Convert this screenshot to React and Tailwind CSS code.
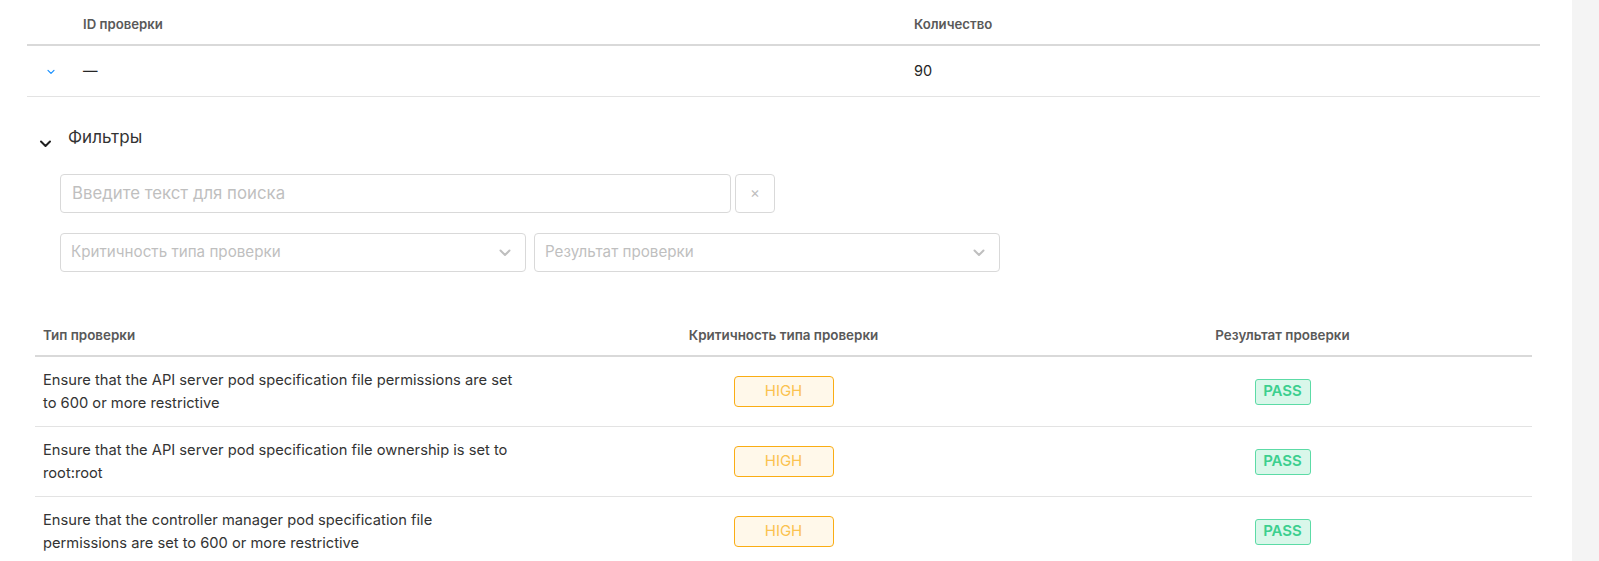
import React from "react";

const font = { fontFamily: "Inter, 'Noto Sans', sans-serif" };

function ChevronDown({ className, stroke = "currentColor", width = 2 }) {
  return (
    <svg viewBox="0 0 12 8" className={className} fill="none" stroke={stroke} strokeWidth={width} strokeLinecap="round" strokeLinejoin="round">
      <path d="M1.5 1.5 L6 6 L10.5 1.5" />
    </svg>
  );
}

const rows = [
  ["Ensure that the API server pod specification file permissions are set", "to 600 or more restrictive"],
  ["Ensure that the API server pod specification file ownership is set to", "root:root"],
  ["Ensure that the controller manager pod specification file", "permissions are set to 600 or more restrictive"],
];

export default function App() {
  return (
    <div className="flex h-[561px] overflow-hidden bg-white" style={font}>
      <div className="flex-1 pl-[27px] pr-[32px]">
        {/* outer table */}
        <div className="grid grid-cols-[48px_831px_1fr] h-[46px] border-b-2 border-[#d9d9d9] items-center pt-[6px] text-[13.2px] font-semibold text-[#595959]">
          <div />
          <div className="px-2">ID проверки</div>
          <div className="px-2">Количество</div>
        </div>
        <div className="grid grid-cols-[48px_831px_1fr] h-[51px] border-b border-[#e3e3e3] items-center text-[14.5px] text-[#262626]">
          <div className="flex justify-center pt-[1px]">
            <ChevronDown className="w-[8px] h-[6px]" stroke="#1890ff" width={1.8} />
          </div>
          <div className="px-2">—</div>
          <div className="px-2">90</div>
        </div>

        {/* filters */}
        <div className="px-2">
          <div className="flex items-start mt-[28px] pl-[4px]">
            <div className="w-[29px] pt-[15px]">
              <ChevronDown className="w-[13px] h-[8px]" stroke="#1f1f1f" width={2} />
            </div>
            <div className="text-[17px] leading-[24px] text-[#333]">Фильтры</div>
          </div>
          <div className="pl-[25px]">
            <div className="flex gap-[4px] mt-[25px]">
              <div className="w-[671px] h-[39px] border border-[#d9d9d9] rounded-[4px] flex items-center px-[11px] text-[16.8px] text-[#bfbfbf]">
                Введите текст для поиска
              </div>
              <div className="w-[40px] h-[39px] border border-[#d9d9d9] rounded-[4px] flex items-center justify-center text-[15px] text-[#bfbfbf]">
                ×
              </div>
            </div>
            <div className="flex gap-[8px] mt-[20px]">
              <div className="w-[466px] h-[39px] border border-[#d9d9d9] rounded-[4px] flex items-center justify-between pl-[10px] pr-[14px] text-[15.2px] text-[#bfbfbf]">
                <span>Критичность типа проверки</span>
                <ChevronDown className="w-[12px] h-[8px]" stroke="#bfbfbf" width={2} />
              </div>
              <div className="w-[466px] h-[39px] border border-[#d9d9d9] rounded-[4px] flex items-center justify-between pl-[10px] pr-[14px] text-[15.2px] text-[#bfbfbf]">
                <span>Результат проверки</span>
                <ChevronDown className="w-[12px] h-[8px]" stroke="#bfbfbf" width={2} />
              </div>
            </div>
          </div>

          {/* inner table */}
          <div className="mt-[44px]">
            <div className="grid grid-cols-3 h-[41px] border-b-2 border-[#d9d9d9] items-center text-[13.4px] font-semibold text-[#595959]">
              <div className="px-2">Тип проверки</div>
              <div className="px-2 text-center">Критичность типа проверки</div>
              <div className="px-2 text-center">Результат проверки</div>
            </div>
            {rows.map((r, i) => (
              <div key={i} className="grid grid-cols-3 py-3 border-b border-[#e3e3e3] items-center text-[14.7px] leading-[22.5px] text-[#333]">
                <div className="px-2 whitespace-nowrap">
                  {r[0]}
                  <br />
                  {r[1]}
                </div>
                <div className="flex justify-center">
                  <span className="w-[100px] h-[31px] flex items-center justify-center border border-[#faad14] bg-[#fff8ea] rounded-[4px] text-[15px] text-[#fbc24f]">
                    HIGH
                  </span>
                </div>
                <div className="flex justify-center">
                  <span className="w-[56px] h-[26px] flex items-center justify-center border border-[#5cdba6] bg-[#d9f7ea] rounded-[3px] text-[15px] font-semibold text-[#3ccf8e]">
                    PASS
                  </span>
                </div>
              </div>
            ))}
          </div>
        </div>
      </div>
      <div className="w-[27px] bg-[#f4f4f4]" />
    </div>
  );
}
